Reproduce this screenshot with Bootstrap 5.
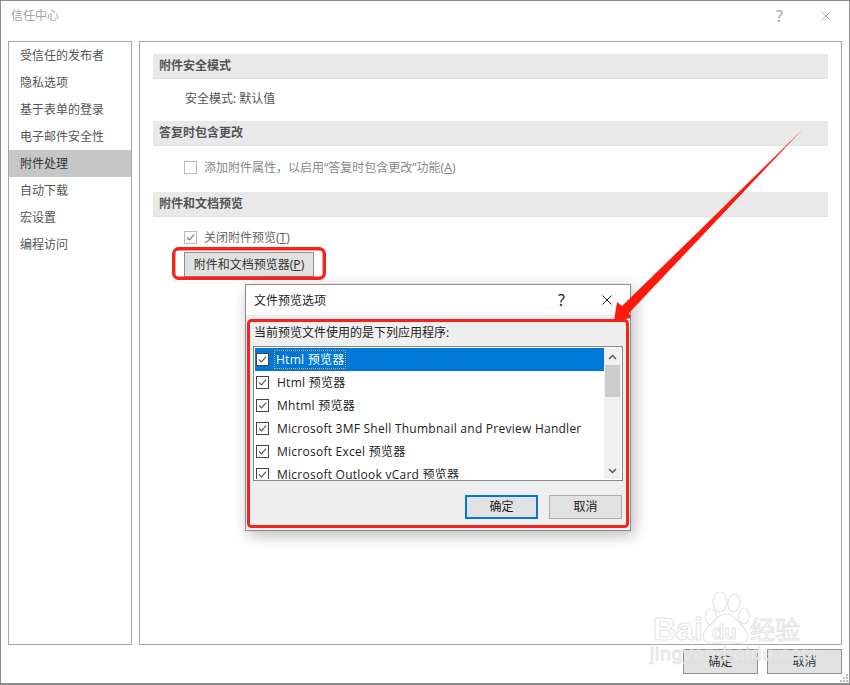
<!DOCTYPE html>
<html lang="zh-CN">
<head>
<meta charset="utf-8">
<title>信任中心</title>
<link href="https://cdn.jsdelivr.net/npm/bootstrap@5.3.0/dist/css/bootstrap.min.css" rel="stylesheet">
<style>
html,body{margin:0;padding:0;background:#fff}
body{width:850px;height:685px;overflow:hidden;position:relative;font-family:"Segoe UI","Noto Sans","Noto Sans CJK SC",sans-serif;font-size:12px;color:#444;line-height:1.25}
.win{width:850px;height:685px;border:1px solid #8c8c8c;border-width:1px 1px 2px 1px;background:#fff}
.win-title{height:40px;flex:none;padding:0 18px 11px 10px;color:#a4a4a4;font-size:12px}
.win-tools{gap:38px}
.win-body{height:604px;flex:none;padding:0 7px;gap:7px}
.side{width:124px;border:1px solid #a6a6a6;padding-top:0}
.side-item{height:27px;padding-left:11px;display:flex;align-items:center;color:#555}
.side-item.on{background:#c6c6c6;color:#333}
.pane{flex:1;border:1px solid #a6a6a6;padding:12px 13px 0 13px}
.band{height:25px;background:#e9e9e9;border-bottom:1px solid #e2e2e2;padding:0 0 2px 6px;display:flex;align-items:center;font-weight:700;color:#555}
.line1{height:42px;padding:0 0 4px 32px;color:#555}
.line2{height:46px;padding:0 0 3px 31px;color:#888;gap:7px}
.line3{height:20px;margin-top:11px;padding:0 0 2px 31px;color:#666;gap:7px}
.cb{width:13px;height:13px;border:1px solid #bbb;background:#fff;flex:none;display:block}
.u{text-decoration:underline;text-underline-offset:1px}
.offbtn{display:flex;align-items:center;justify-content:center;background:#e1e1e1;border:1px solid #adadad;border-radius:0;padding:0;font-size:12px;color:#333;line-height:1}
.offbtn:hover{background:#e1e1e1;color:#333;border-color:#adadad}
.prev-btn{margin:4px 0 0 31px;width:130px;height:25px;border-color:#8f8f8f}
.foot{height:38px;flex:none;padding:4px 7px 0 0;gap:9px}
.foot .offbtn{width:75px;height:25px;border-color:#8f8f8f}
.grip{position:absolute;right:1px;bottom:2px}
.dlg{position:absolute;left:245px;top:284px;width:386px;height:247px;background:#efefef;border:1px solid #8c8c8c;box-shadow:3px 4px 14px rgba(0,0,0,.28);color:#222;z-index:2}
.dlg-head{height:30px;background:#fff;padding:0 18px 0 8px;color:#222}
.dlg-tools{gap:37px}
.dlg-sub{height:31px;padding-left:8px;padding-top:10px;color:#222}
.lst{margin:0 7px;height:135px;width:370px;border:1px solid #828790;background:#fff;padding:1px;overflow:hidden}
.lst-rows{flex:1;min-width:0;overflow:hidden;border:0;border-radius:0}
.lst-row{height:23px;flex:none;display:flex;align-items:center;padding:0 0 0 1px;gap:8px;border:0;border-radius:0;background:#fff;font-family:"Open Sans","Noto Sans CJK SC",sans-serif;font-size:12px;color:#222;white-space:nowrap;letter-spacing:.25px}
.lst-row.sel{background:#0078d7;color:#fff}
.lst-row .cb{border:1.5px solid #444;width:13px;height:13px;color:#555}
.fc{padding:2px 2px;margin-left:-3px;outline:1px dotted #f0a040;outline-offset:-1px}
.sbar{width:17px;flex:none;background:#f0f0f0;display:flex;flex-direction:column;align-items:center}
.sarrow{height:17px;display:flex;align-items:center;justify-content:center;flex:none}
.sthumb{height:32px;width:15px;background:#cdcdcd;flex:none}
.dlg-foot{padding:14px 8px 0 0;gap:11px}
.dlg-foot .offbtn{width:73px;height:24px;color:#222}
.dlg-foot .offbtn.def{border:2px solid #0078d7}
.ink{position:absolute;left:0;top:0;z-index:3;pointer-events:none}
.mark-wm{position:absolute;left:640px;top:585px;z-index:1;pointer-events:none}
.wm-txt{font-family:"Liberation Sans","Noto Sans CJK SC",sans-serif;fill:#fff;fill-opacity:.45;stroke:#e4e4e4;stroke-width:1}
.wm-paw{fill:#fff;fill-opacity:.45;stroke:#e4e4e4;stroke-width:1.2}
</style>
</head>
<body>
<svg width="0" height="0" class="d-block position-absolute">
  <symbol id="tick" viewBox="0 0 13 13"><path d="M2.300 6.300 5.200 9.300 10.700 3" fill="none" stroke="currentColor" stroke-width="1.300"/></symbol>
</svg>

<div class="win d-flex flex-column">
  <div class="win-title d-flex align-items-center justify-content-between">
    <span>信任中心</span>
    <span class="win-tools d-flex align-items-center">
      <span class="fs-6 fw-normal">?</span>
      <svg width="10" height="10" viewBox="0 0 10 10"><path d="M.5.5l9 9M9.5.5l-9 9" stroke="#a8a8a8" fill="none"/></svg>
    </span>
  </div>
  <div class="win-body d-flex">
    <div class="side">
      <div class="side-item">受信任的发布者</div>
      <div class="side-item">隐私选项</div>
      <div class="side-item">基于表单的登录</div>
      <div class="side-item">电子邮件安全性</div>
      <div class="side-item on">附件处理</div>
      <div class="side-item">自动下载</div>
      <div class="side-item">宏设置</div>
      <div class="side-item">编程访问</div>
    </div>
    <div class="pane">
      <div class="band">附件安全模式</div>
      <div class="line1 d-flex align-items-center">安全模式: 默认值</div>
      <div class="band">答复时包含更改</div>
      <div class="line2 d-flex align-items-center"><span class="cb"></span><span>添加附件属性，以启用“答复时包含更改”功能(<span class="u">A</span>)</span></div>
      <div class="band">附件和文档预览</div>
      <div class="line3 d-flex align-items-center"><svg class="cb text-secondary"><use href="#tick"/></svg><span>关闭附件预览(<span class="u">T</span>)</span></div>
      <button type="button" class="btn offbtn prev-btn">附件和文档预览器(<span class="u">P</span>)</button>
    </div>
  </div>
  <div class="foot d-flex justify-content-end">
    <button type="button" class="btn offbtn">确定</button>
    <button type="button" class="btn offbtn">取消</button>
  </div>
</div>
<svg class="grip" width="9" height="9" viewBox="0 0 9 9" fill="#bdbdbd"><rect x="6" y="0" width="2" height="2"/><rect x="3" y="3" width="2" height="2"/><rect x="6" y="3" width="2" height="2"/><rect x="0" y="6" width="2" height="2"/><rect x="3" y="6" width="2" height="2"/><rect x="6" y="6" width="2" height="2"/></svg>

<svg class="mark-wm" width="175" height="90" viewBox="0 0 175 90">
  <g class="wm-paw">
    <ellipse cx="80" cy="17" rx="7" ry="10"/>
    <ellipse cx="94" cy="18" rx="6" ry="9" transform="rotate(10 94 18)"/>
    <ellipse cx="104" cy="31" rx="5.500" ry="8"/>
    <ellipse cx="71" cy="32" rx="5.500" ry="8"/>
    <path d="M86 29c8 0 12 8 18 14 6 7 5 14-3 15-6 .5-9-1-15-1s-10 2-16 1c-8-1-9-8-3-15 6-6 11-14 19-14z"/>
  </g>
  <text x="13" y="55" class="wm-txt" font-size="32" font-weight="700">Bai</text>
  <text x="72" y="54" class="wm-txt" font-size="20" font-weight="700">du</text>
  <text x="110" y="54" class="wm-txt" font-size="25">经验</text>
  <text x="10" y="75" class="wm-txt" font-size="19" letter-spacing=".9">jingyan.baidu.com</text>
</svg>

<div class="dlg d-flex flex-column">
  <div class="dlg-head d-flex align-items-center justify-content-between">
    <span>文件预览选项</span>
    <span class="dlg-tools d-flex align-items-center">
      <span class="fs-6">?</span>
      <svg width="10" height="10" viewBox="0 0 10 10"><path d="M.5.5l9 9M9.5.5l-9 9" stroke="#222" fill="none"/></svg>
    </span>
  </div>
  <div class="dlg-sub">当前预览文件使用的是下列应用程序:</div>
  <div class="lst d-flex">
    <div class="list-group lst-rows">
      <div class="list-group-item lst-row sel"><svg class="cb"><use href="#tick"/></svg><span class="fc">Html 预览器</span></div>
      <div class="list-group-item lst-row"><svg class="cb"><use href="#tick"/></svg><span>Html 预览器</span></div>
      <div class="list-group-item lst-row"><svg class="cb"><use href="#tick"/></svg><span>Mhtml 预览器</span></div>
      <div class="list-group-item lst-row"><svg class="cb"><use href="#tick"/></svg><span>Microsoft 3MF Shell Thumbnail and Preview Handler</span></div>
      <div class="list-group-item lst-row"><svg class="cb"><use href="#tick"/></svg><span>Microsoft Excel 预览器</span></div>
      <div class="list-group-item lst-row"><svg class="cb"><use href="#tick"/></svg><span>Microsoft Outlook vCard 预览器</span></div>
    </div>
    <div class="sbar">
      <div class="sarrow"><svg width="9" height="6" viewBox="0 0 9 6"><path d="M1 5l3.500-3.500L8 5" fill="none" stroke="#555" stroke-width="1.500"/></svg></div>
      <div class="sthumb"></div>
      <div class="flex-grow-1"></div>
      <div class="sarrow"><svg width="9" height="6" viewBox="0 0 9 6"><path d="M1 1l3.500 3.500L8 1" fill="none" stroke="#555" stroke-width="1.500"/></svg></div>
    </div>
  </div>
  <div class="dlg-foot d-flex justify-content-end">
    <button type="button" class="btn offbtn def">确定</button>
    <button type="button" class="btn offbtn">取消</button>
  </div>
</div>

<svg class="ink" width="850" height="685" viewBox="0 0 850 685" fill="none">
  <rect x="173.700" y="248.700" width="150.600" height="29.600" rx="5" stroke="#f7221b" stroke-width="3.400"/>
  <rect x="248.500" y="320.500" width="379" height="206" rx="3" stroke="#f7221b" stroke-width="3"/>
  <path d="M802 130 L700 230 L622 306 L617 302 L614 321 L631 318 L629 313 L700 238 Z" fill="#fb1a10"/>
</svg>
</body>
</html>
